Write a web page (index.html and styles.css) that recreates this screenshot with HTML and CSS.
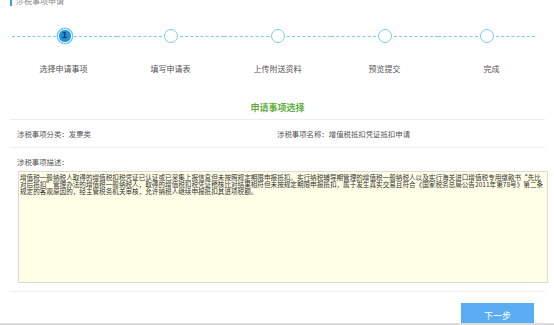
FILE: index.html
```html
<!DOCTYPE html>
<html lang="zh-CN">
<head>
    <meta charset="UTF-8">
    <meta name="viewport" content="width=device-width, initial-scale=1.0">
    <title>涉税事项申请</title>
    <link rel="stylesheet" href="styles.css">
</head>
<body>
    <div class="page">
        <div class="title">涉税事项申请</div>

        <div class="steps">
            <div class="step first">
                <div class="track"><span class="line"></span><span class="dot active">1</span><span class="line"></span></div>
                <div class="label">选择申请事项</div>
            </div>
            <div class="step">
                <div class="track"><span class="line"></span><span class="dot"></span><span class="line"></span></div>
                <div class="label">填写申请表</div>
            </div>
            <div class="step">
                <div class="track"><span class="line"></span><span class="dot"></span><span class="line"></span></div>
                <div class="label">上传附送资料</div>
            </div>
            <div class="step">
                <div class="track"><span class="line"></span><span class="dot"></span><span class="line"></span></div>
                <div class="label">预览提交</div>
            </div>
            <div class="step last">
                <div class="track"><span class="line"></span><span class="dot"></span><span class="line"></span></div>
                <div class="label">完成</div>
            </div>
        </div>

        <h2 class="section-title">申请事项选择</h2>

        <div class="info-row">
            <div class="info-cell">涉税事项分类：发票类</div>
            <div class="info-cell">涉税事项名称：增值税抵扣凭证抵扣申请</div>
        </div>

        <div class="desc-label">涉税事项描述：</div>
        <textarea class="desc" readonly>增值税一般纳税人取得的增值税扣税凭证已认证或已采集上报信息但未按照规定期限申报抵扣。实行纳税辅导期管理的增值税一般纳税人以及实行海关进口增值税专用缴款书“先比对后抵扣”管理办法的增值税一般纳税人，取得的增值税扣税凭证稽核比对结果相符但未按规定期限申报抵扣，属于发生真实交易且符合《国家税务总局公告2011年第78号》第二条规定的客观原因的，经主管税务机关审核，允许纳税人继续申报抵扣其进项税额。</textarea>

        <div class="actions">
            <button type="button" class="btn-next">下一步</button>
        </div>
    </div>
</body>
</html>
```

FILE: styles.css
```css
body {
    margin: 0;
    font-family: "Noto Sans CJK SC", "Noto Sans", sans-serif;
    background-color: #fff;
    color: #555;
}

.page {
    height: 323px;
    overflow: hidden;
    border-bottom: 2px solid #dcdcdc;
    padding: 0 9px 0 10px;
}

.title {
    margin-top: -4px;
    height: 10px;
    line-height: 10px;
    font-size: 8px;
    color: #8a8a8a;
    border-left: 2px solid #3d9ee6;
    padding-left: 4px;
}

.steps {
    display: grid;
    grid-template-columns: repeat(5, 107px);
    padding-top: 23.5px;
}

.step {
    display: flex;
    flex-direction: column;
    align-items: center;
}

.track {
    display: flex;
    align-items: center;
    width: 100%;
    height: 13px;
}

.line {
    flex: 1;
    height: 0;
    border-top: 1px dashed #7ccbef;
}

.step.first .line:first-child {
    margin-left: 2px;
}

.step.last .line:last-child {
    margin-right: 10px;
}

.dot {
    box-sizing: border-box;
    width: 14px;
    height: 14px;
    margin: 0 2px;
    border: 1.5px solid #7ccbef;
    border-radius: 50%;
    background-color: #fff;
    font-size: 8px;
    line-height: 10px;
    text-align: center;
    font-weight: bold;
}

.dot.active {
    background-color: #1e8fd8;
    border: 1.5px solid #fff;
    box-shadow: 0 0 0 1.5px #7ccbef;
    color: #1a2c45;
}

.label {
    margin-top: 20.5px;
    font-size: 8px;
    line-height: 12px;
    color: #555;
}

.section-title {
    margin: 26px 0 0;
    padding-bottom: 4px;
    border-bottom: 1px solid #eee;
    font-size: 9px;
    line-height: 14px;
    font-weight: bold;
    color: #62ad3e;
    text-align: center;
}

.info-row {
    display: grid;
    grid-template-columns: 267px 1fr;
    height: 27px;
    line-height: 27px;
    border-bottom: 1px solid #eee;
    font-size: 7.4px;
    color: #555;
}

.info-cell {
    padding-left: 7px;
}

.info-cell + .info-cell {
    padding-left: 0;
}

.desc-label {
    margin-top: 8px;
    padding-left: 7px;
    font-size: 7.4px;
    line-height: 12px;
}

.desc {
    display: block;
    box-sizing: border-box;
    width: 530px;
    height: 112px;
    margin: 3px 0 0 8px;
    padding: 2px 1px;
    border: 1px solid #dcdcd6;
    background-color: #fffee6;
    font-family: "Noto Sans CJK SC", sans-serif;
    font-size: 6.6px;
    line-height: 7px;
    color: #333;
    resize: none;
    overflow: hidden;
    outline: none;
}

.actions {
    margin-top: 8px;
    border-top: 1px solid #eee;
    padding-top: 11px;
    display: flex;
    justify-content: flex-end;
    padding-right: 11px;
}

.btn-next {
    width: 73px;
    height: 24px;
    border: none;
    background-color: #5aacf3;
    color: #fff;
    font-family: "Noto Sans CJK SC", sans-serif;
    font-size: 9px;
    cursor: pointer;
}
```
